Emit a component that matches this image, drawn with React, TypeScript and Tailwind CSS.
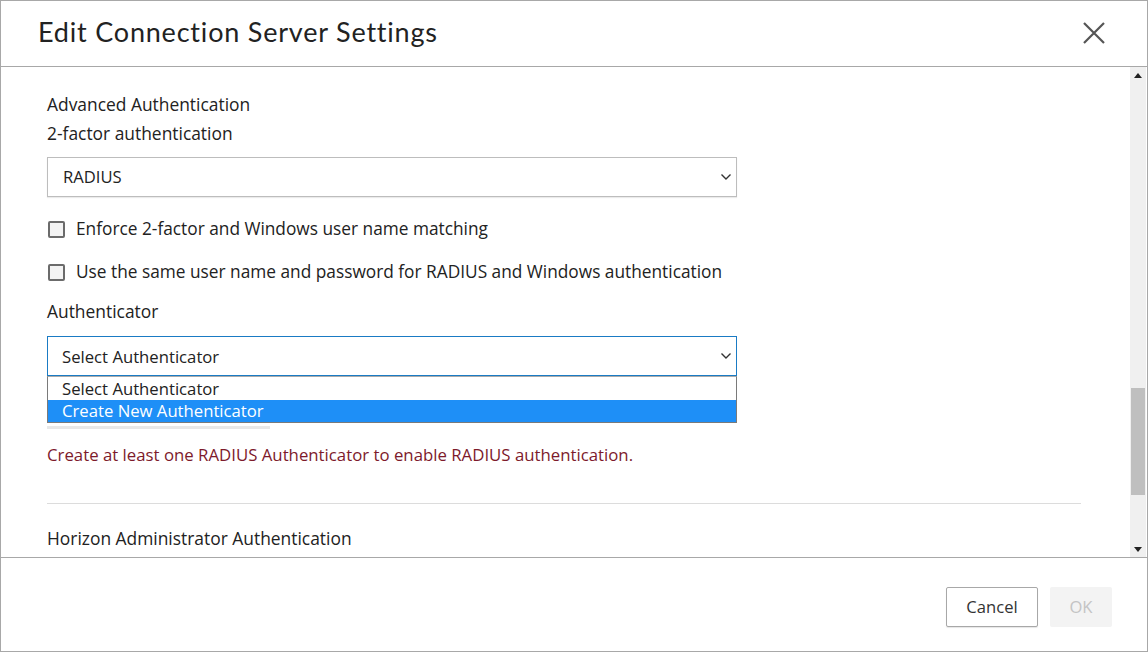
import React from "react";

const Chevron = () => (
  <svg width="12" height="8" viewBox="0 0 12 8" className="text-[#333]">
    <path d="M1.5 1.5 L6 6 L10.5 1.5" fill="none" stroke="currentColor" strokeWidth="1.4" />
  </svg>
);

const Checkbox = ({ label }: { label: string }) => (
  <div className="flex items-center h-[22px]">
    <div className="w-[17px] h-[17px] ml-px border-2 border-[#6b6b6b] rounded-[2px] bg-[#f3f3f3]" />
    <span className="ml-[11px] text-[17.3px] leading-[22px] text-[#222]">{label}</span>
  </div>
);

export default function App() {
  return (
    <div
      className="w-[1148px] h-[652px] flex flex-col bg-white border border-[#a8a8a8] overflow-hidden"
      style={{ fontFamily: '"Open Sans", "Noto Sans", sans-serif' }}
    >
      {/* header */}
      <div className="h-[66px] shrink-0 flex items-center justify-between border-b border-[#a8a8a8] pl-[37px] pr-[42px]">
        <h1
          className="text-[27px] font-normal text-[#222] tracking-[0.8px] mt-[-2px]"
          style={{ fontFamily: 'Lato, "Noto Sans", sans-serif' }}
        >
          Edit Connection Server Settings
        </h1>
        <svg width="22" height="22" viewBox="0 0 22 22" className="text-[#555] mt-[-2px]">
          <path d="M1 1 L21 21 M21 1 L1 21" stroke="currentColor" strokeWidth="2.2" />
        </svg>
      </div>

      {/* body */}
      <div className="flex-1 flex min-h-0">
        <div className="flex-1 pl-[46px] pr-[48px] pt-[26px] flex flex-col">
          <div className="text-[17.4px] text-[#222] leading-[22px]">Advanced Authentication</div>
          <div className="text-[17.4px] text-[#222] leading-[22px] mt-[7px]">2-factor authentication</div>
          <div className="mt-[13px] w-[690px] h-[40px] border border-[#bdbdbd] flex items-center justify-between pl-[15px] pr-[4px] shadow-[0_1px_1px_rgba(0,0,0,0.08)]">
            <span className="text-[16.6px] text-[#222] mt-[1px]">RADIUS</span>
            <Chevron />
          </div>
          <div className="mt-[21px]">
            <Checkbox label="Enforce 2-factor and Windows user name matching" />
          </div>
          <div className="mt-[21px]">
            <Checkbox label="Use the same user name and password for RADIUS and Windows authentication" />
          </div>
          <div className="text-[17.4px] text-[#222] leading-[22px] mt-[17px]">Authenticator</div>
          <div className="mt-[14px] w-[690px] relative">
            <div className="h-[40px] border border-[#1a7bc4] flex items-center justify-between pl-[14px] pr-[4px]">
              <span className="text-[16.7px] text-[#222] mt-[1px]">Select Authenticator</span>
              <Chevron />
            </div>
            <div className="w-[223px] h-[3px] bg-[#e8e8e8] mt-[50px]" />
            <div className="absolute left-0 top-[40px] w-[690px] border border-[#7a7a7a] border-t-[#aaa] bg-white">
              <div className="h-[23px] pl-[14px] flex items-center text-[16.7px] text-[#222]">Select Authenticator</div>
              <div className="h-[22px] pl-[14px] flex items-center text-[16.7px] text-white bg-[#1e8ff7]">Create New Authenticator</div>
            </div>
          </div>
          <div className="mt-[15px] text-[16.8px] text-[#7d1a2b] leading-[22px]">
            Create at least one RADIUS Authenticator to enable RADIUS authentication.
          </div>
          <div className="mt-[37px] h-px bg-[#dcdcdc] mr-[1px]" />
          <div className="mt-[23px] text-[17.4px] text-[#222] leading-[22px]">Horizon Administrator Authentication</div>
        </div>
        {/* scrollbar */}
        <div className="w-[16px] shrink-0 bg-[#f0f0f0] flex flex-col mr-px">
          <div className="h-[16px] flex items-center justify-center">
            <svg width="8" height="5" viewBox="0 0 8 5"><path d="M0 5 L4 0 L8 5 Z" fill="#222" /></svg>
          </div>
          <div className="h-[305px]" />
          <div className="h-[107px] bg-[#bfbfbf] mx-px" />
          <div className="flex-1" />
          <div className="h-[16px] flex items-center justify-center">
            <svg width="8" height="5" viewBox="0 0 8 5"><path d="M0 0 L4 5 L8 0 Z" fill="#222" /></svg>
          </div>
        </div>
      </div>

      {/* footer */}
      <div className="h-[94px] shrink-0 border-t border-[#a8a8a8] flex items-center justify-end pr-[35px] gap-[12px] pt-[5px]">
        <button className="w-[92px] h-[40px] border border-[#a8a8a8] rounded-[2px] bg-white text-[16.6px] text-[#333] shadow-[0_1px_1px_rgba(0,0,0,0.1)]">
          Cancel
        </button>
        <button className="w-[62px] h-[40px] rounded-[2px] bg-[#f3f3f3] text-[16.6px] text-[#c4c4c4]">OK</button>
      </div>
    </div>
  );
}
